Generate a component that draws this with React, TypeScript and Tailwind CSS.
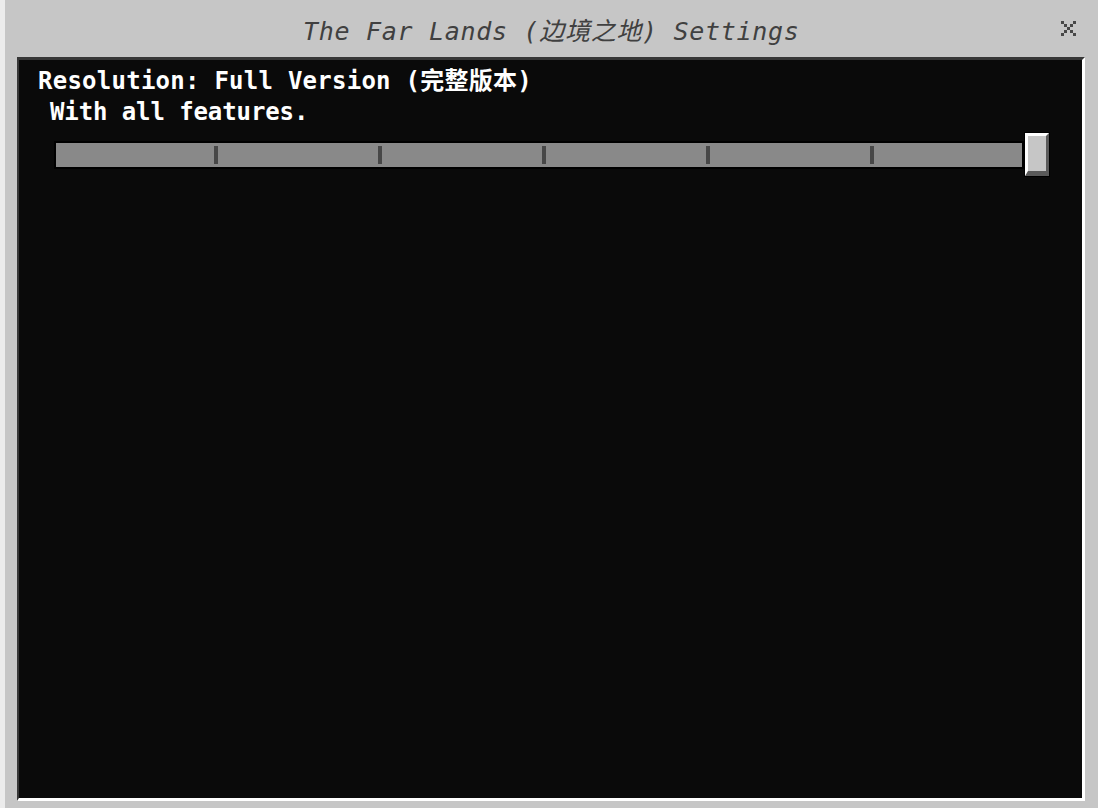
import React from "react";

const mono = { fontFamily: '"DejaVu Sans Mono", "Noto Sans CJK SC", monospace' };

function CloseX() {
  const cells = [
    [0, 0], [4, 0], [1, 1], [3, 1], [2, 2], [1, 3], [3, 3], [0, 4], [4, 4],
  ];
  return (
    <svg width="15" height="15" viewBox="0 0 15 15">
      {cells.map(([x, y], i) => (
        <rect key={i} x={x * 3} y={y * 3} width="3" height="3" fill="#474747" />
      ))}
    </svg>
  );
}

export default function App() {
  const ticks = [0, 1, 2, 3, 4];
  return (
    <div className="w-[1098px] h-[808px] bg-[#c6c6c6] border-l-[5px] border-[#ececec] flex flex-col overflow-hidden">
      <div className="h-[57px] flex items-center pl-[298px] pr-[22px]">
        <span
          className="flex-1 italic text-[25px] leading-none tracking-[0.7px] text-[#404040] pt-[6px]"
          style={mono}
        >
          The Far Lands (边境之地) Settings
        </span>
        <div className="self-start mt-[21px]">
          <CloseX />
        </div>
      </div>
      <div className="flex-1 ml-[12px] mr-[13px] mb-[7px] border-t-[3px] border-l-[2px] border-t-[#373737] border-l-[#373737] border-b-[3px] border-r-[3px] border-b-white border-r-white bg-[#0a0a0a] pl-[19px] pt-[6px]">
        <div className="text-white text-[24px] leading-[31px] font-bold tracking-[0.25px]" style={mono}>
          <div>Resolution: Full Version (完整版本)</div>
          <div className="pl-[12px] tracking-[-0.1px]">With all features.</div>
        </div>
        <div className="ml-[16px] mt-[4px] flex items-center h-[45px]">
          <div className="w-[970px] h-[28px] border-2 border-black bg-[#898989] flex items-center pl-[158px] gap-[160px]">
            {ticks.map((t) => (
              <div key={t} className="w-[4px] h-[18px] bg-[#474747]" />
            ))}
          </div>
          <div className="w-[26px] h-[45px] border border-black bg-[#c6c6c6]">
            <div className="w-full h-full border-t-[3px] border-l-[3px] border-t-white border-l-white border-r-[3px] border-b-[5px] border-r-[#5a5a5a] border-b-[#5a5a5a]" />
          </div>
        </div>
      </div>
    </div>
  );
}
